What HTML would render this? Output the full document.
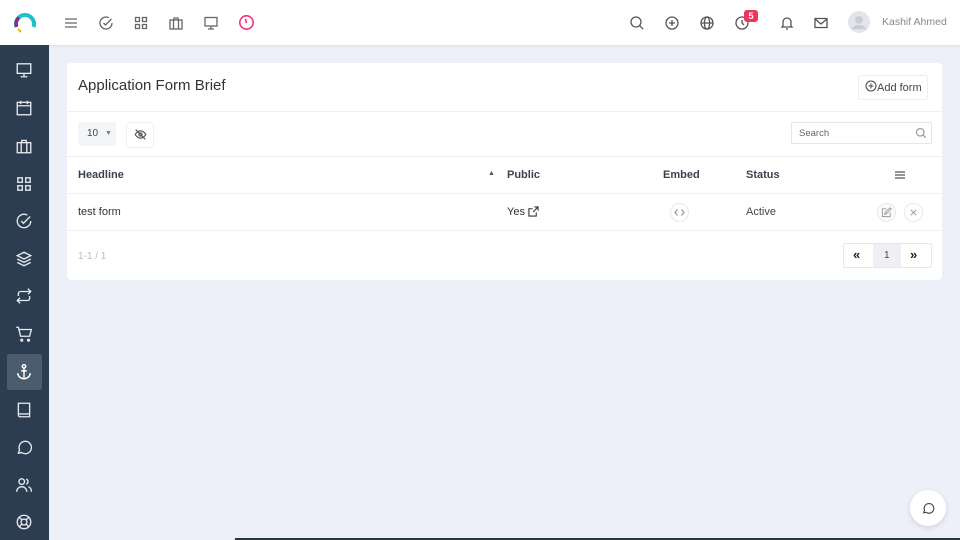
<!DOCTYPE html>
<html><head><meta charset="utf-8"><style>
*{box-sizing:border-box;margin:0;padding:0}
body{width:960px;height:540px;overflow:hidden;background:#eef0f9;font-family:"Liberation Sans",sans-serif;position:relative;color:#333}
.top{position:absolute;left:0;top:0;width:960px;height:45px;background:#fff;box-shadow:0 1px 3px rgba(0,0,0,.08)}
.side{position:absolute;left:0;top:45px;width:49px;height:495px;background:#2c3d51}
.ic{position:absolute}
svg{display:block}
.card{position:absolute;left:67px;top:63px;width:875px;height:217px;background:#fff;border-radius:4px}
.hl{position:absolute;left:0;width:875px;height:1px;background:#eef0f3}
.t{position:absolute;font-size:11px;white-space:nowrap}
.b{font-weight:bold;color:#3a4250}
</style></head><body>
<div class="top">
 <svg class="ic" style="left:13px;top:12px" width="24" height="24" viewBox="0 0 24 24"><path d="M3.5 15 A9 9 0 1 1 20.5 15" fill="none" stroke="#1fc1c9" stroke-width="4"/><path d="M3.5 15 A9 9 0 0 1 6 5.5" fill="none" stroke="#8a2c8e" stroke-width="3.5"/><path d="M5 17 l3 3" stroke="#f2b400" stroke-width="2"/></svg>
 <svg class="ic" style="left:63px;top:15px" width="16" height="16" viewBox="0 0 16 16" fill="none" stroke="#666" stroke-width="1.3"><path d="M2 4h12M2 8h12M2 12h12"/></svg>
 <svg class="ic" style="left:98px;top:15px" width="16" height="16" viewBox="0 0 16 16" fill="none" stroke="#666" stroke-width="1.3"><path d="M14 8a6 6 0 1 1-3-5.2"/><path d="M5.5 8l2 2 6-6"/></svg>
 <svg class="ic" style="left:133px;top:15px" width="16" height="16" viewBox="0 0 16 16" fill="none" stroke="#666" stroke-width="1.3"><rect x="2.5" y="2.5" width="4" height="4"/><rect x="9.5" y="2.5" width="4" height="4"/><rect x="2.5" y="9.5" width="4" height="4"/><rect x="9.5" y="9.5" width="4" height="4"/></svg>
 <svg class="ic" style="left:168px;top:15px" width="16" height="16" viewBox="0 0 16 16" fill="none" stroke="#666" stroke-width="1.3"><rect x="2" y="5" width="12" height="9"/><path d="M6 5V3h4v2M5.5 5v9M10.5 5v9"/></svg>
 <svg class="ic" style="left:203px;top:15px" width="16" height="16" viewBox="0 0 16 16" fill="none" stroke="#666" stroke-width="1.3"><rect x="2" y="2.5" width="12" height="8.5"/><path d="M8 11v3M5 14h6"/></svg>
 <svg class="ic" style="left:238px;top:14px" width="17" height="17" viewBox="0 0 16 16" fill="none" stroke="#f0347a" stroke-width="1.5"><circle cx="8" cy="8" r="6.3"/><path d="M7 4.5l1 4"/></svg>
 <svg class="ic" style="left:629px;top:15px" width="16" height="16" viewBox="0 0 16 16" fill="none" stroke="#555" stroke-width="1.3"><circle cx="7" cy="7" r="5"/><path d="M10.7 10.7l3.5 3.5"/></svg>
 <svg class="ic" style="left:664px;top:15px" width="16" height="16" viewBox="0 0 16 16" fill="none" stroke="#555" stroke-width="1.3"><circle cx="8" cy="8" r="6"/><path d="M8 5v6M5 8h6"/></svg>
 <svg class="ic" style="left:699px;top:15px" width="16" height="16" viewBox="0 0 16 16" fill="none" stroke="#555" stroke-width="1.3"><circle cx="8" cy="8" r="6"/><ellipse cx="8" cy="8" rx="2.6" ry="6"/><path d="M2 8h12"/></svg>
 <svg class="ic" style="left:734px;top:15px" width="16" height="16" viewBox="0 0 16 16" fill="none" stroke="#555" stroke-width="1.3"><circle cx="8" cy="8" r="6"/><path d="M8 5v3l2 2"/></svg>
 <div style="position:absolute;left:744px;top:10px;width:14px;height:12px;background:#f0345a;border-radius:3px;color:#fff;font-size:9px;text-align:center;line-height:12px;font-weight:bold">5</div>
 <svg class="ic" style="left:779px;top:15px" width="16" height="16" viewBox="0 0 16 16" fill="none" stroke="#555" stroke-width="1.3"><path d="M4 11V7a4 4 0 0 1 8 0v4l1 1H3z"/><path d="M7 14h2"/></svg>
 <svg class="ic" style="left:813px;top:15px" width="16" height="16" viewBox="0 0 16 16" fill="none" stroke="#555" stroke-width="1.3"><rect x="2" y="3.5" width="12" height="9"/><path d="M2 4l6 5 6-5"/></svg>
 <svg class="ic" style="left:848px;top:11px" width="22" height="22" viewBox="0 0 20 20"><circle cx="10" cy="10" r="10" fill="#e3e5ea"/><circle cx="10" cy="8" r="3.5" fill="#c8ccd3"/><path d="M3.5 16.5a7 6 0 0 1 13 0" fill="#c8ccd3"/></svg>
 <div class="t" style="left:882px;top:16px;color:#888;font-size:10.5px">Kashif Ahmed</div>
</div>
<div class="side">
 <div style="position:absolute;left:7px;top:309px;width:35px;height:36px;background:#4c5c6f;border-radius:2px"></div>
 <svg class="ic" style="left:15px;top:16px" width="18" height="18" viewBox="0 0 16 16" fill="none" stroke="#e6e9ee" stroke-width="1.2"><rect x="2" y="2.5" width="12" height="8.5"/><path d="M8 11v3M5 14h6"/></svg>
 <svg class="ic" style="left:15px;top:54px" width="18" height="18" viewBox="0 0 16 16" fill="none" stroke="#e6e9ee" stroke-width="1.2"><rect x="2" y="3" width="12" height="11"/><path d="M2 6h12M5 1.5v3M11 1.5v3"/></svg>
 <svg class="ic" style="left:15px;top:92px" width="18" height="18" viewBox="0 0 16 16" fill="none" stroke="#e6e9ee" stroke-width="1.2"><rect x="2" y="5" width="12" height="9"/><path d="M6 5V3h4v2M5.5 5v9M10.5 5v9"/></svg>
 <svg class="ic" style="left:15px;top:130px" width="18" height="18" viewBox="0 0 16 16" fill="none" stroke="#e6e9ee" stroke-width="1.2"><rect x="2.5" y="2.5" width="4" height="4"/><rect x="9.5" y="2.5" width="4" height="4"/><rect x="2.5" y="9.5" width="4" height="4"/><rect x="9.5" y="9.5" width="4" height="4"/></svg>
 <svg class="ic" style="left:15px;top:167px" width="18" height="18" viewBox="0 0 16 16" fill="none" stroke="#e6e9ee" stroke-width="1.2"><path d="M14 8a6 6 0 1 1-3-5.2"/><path d="M5.5 8l2 2 6-6"/></svg>
 <svg class="ic" style="left:15px;top:205px" width="18" height="18" viewBox="0 0 16 16" fill="none" stroke="#e6e9ee" stroke-width="1.2"><path d="M8 2l6 3-6 3-6-3z"/><path d="M2 8l6 3 6-3M2 11l6 3 6-3"/></svg>
 <svg class="ic" style="left:15px;top:242px" width="18" height="18" viewBox="0 0 16 16" fill="none" stroke="#e6e9ee" stroke-width="1.2"><path d="M3 8V6a2 2 0 0 1 2-2h9M11.5 1.5L14 4l-2.5 2.5M13 8v2a2 2 0 0 1-2 2H2M4.5 14.5L2 12l2.5-2.5"/></svg>
 <svg class="ic" style="left:15px;top:280px" width="18" height="18" viewBox="0 0 16 16" fill="none" stroke="#e6e9ee" stroke-width="1.2"><path d="M1 2h2l2 8h8l1.5-6H4"/><circle cx="6" cy="13.5" r=".8"/><circle cx="12" cy="13.5" r=".8"/></svg>
 <svg class="ic" style="left:15px;top:318px" width="18" height="18" viewBox="0 0 16 16" fill="none" stroke="#fff" stroke-width="1.3"><circle cx="8" cy="3" r="1.5"/><path d="M8 4.5V14M2.5 9a5.5 5 0 0 0 11 0M5.5 7h5"/></svg>
 <svg class="ic" style="left:15px;top:356px" width="18" height="18" viewBox="0 0 16 16" fill="none" stroke="#e6e9ee" stroke-width="1.2"><path d="M3 2h10v12H4.5A1.5 1.5 0 0 1 3 12.5z"/><path d="M3 11.5h10"/></svg>
 <svg class="ic" style="left:15px;top:393px" width="18" height="18" viewBox="0 0 16 16" fill="none" stroke="#e6e9ee" stroke-width="1.2"><path d="M3 13.5l1-3A5.5 5.5 0 1 1 6 13z"/></svg>
 <svg class="ic" style="left:15px;top:431px" width="18" height="18" viewBox="0 0 16 16" fill="none" stroke="#e6e9ee" stroke-width="1.2"><circle cx="6" cy="5" r="2.5"/><path d="M1.5 14a4.5 4.5 0 0 1 9 0M10 2.7a2.5 2.5 0 0 1 0 4.6M12 9.5a4.5 4.5 0 0 1 2.5 4.5"/></svg>
 <svg class="ic" style="left:15px;top:468px" width="18" height="18" viewBox="0 0 16 16" fill="none" stroke="#e6e9ee" stroke-width="1.2"><circle cx="8" cy="8" r="6"/><circle cx="8" cy="8" r="2.6"/><path d="M3.8 3.8l2.4 2.4M12.2 3.8L9.8 6.2M3.8 12.2l2.4-2.4M12.2 12.2L9.8 9.8"/></svg>
</div>
<div class="card">
 <div class="t" style="left:11px;top:14px;font-size:15px;color:#333">Application Form Brief</div>
 <div style="position:absolute;left:791px;top:12px;width:70px;height:25px;border:1px solid #eceef2;border-radius:3px"></div>
 <svg class="ic" style="left:798px;top:17px" width="12" height="12" viewBox="0 0 12 12" fill="none" stroke="#444" stroke-width="1"><circle cx="6" cy="6" r="5"/><path d="M6 3.5v5M3.5 6h5"/></svg>
 <div class="t" style="left:810px;top:19px;color:#444">Add form</div>
 <div class="hl" style="top:48px"></div>
 <div style="position:absolute;left:11px;top:59px;width:38px;height:24px;background:#f4f5f8;border-radius:3px"></div>
 <div class="t" style="left:20px;top:65px;font-size:10px;color:#444">10</div>
 <div class="t" style="left:38px;top:67px;font-size:7px;color:#777">▼</div>
 <div style="position:absolute;left:59px;top:59px;width:28px;height:26px;border:1px solid #eef0f3;border-radius:4px"></div>
 <svg class="ic" style="left:67px;top:65px" width="13" height="13" viewBox="0 0 16 16" fill="none" stroke="#555" stroke-width="1.4"><path d="M1.5 8s2.5-4.5 6.5-4.5S14.5 8 14.5 8 12 12.5 8 12.5 1.5 8 1.5 8z"/><circle cx="8" cy="8" r="2"/><path d="M2 2l12 12"/></svg>
 <div style="position:absolute;left:724px;top:59px;width:141px;height:22px;border:1px solid #e3e6ec;border-radius:2px"></div>
 <div class="t" style="left:732px;top:65px;font-size:9.5px;color:#666">Search</div>
 <svg class="ic" style="left:848px;top:64px" width="12" height="12" viewBox="0 0 16 16" fill="none" stroke="#999" stroke-width="1.6"><circle cx="7" cy="7" r="5"/><path d="M10.7 10.7l3.5 3.5"/></svg>
 <div class="hl" style="top:93px"></div>
 <div class="t b" style="left:11px;top:106px">Headline</div>
 <div class="t" style="left:421px;top:107px;font-size:7px;color:#555">▲</div>
 <div class="t b" style="left:440px;top:106px">Public</div>
 <div class="t b" style="left:596px;top:106px">Embed</div>
 <div class="t b" style="left:679px;top:106px">Status</div>
 <svg class="ic" style="left:827px;top:106px" width="12" height="12" viewBox="0 0 12 12" fill="none" stroke="#555" stroke-width="1.2"><path d="M1 3h10M1 6h10M1 9h10"/></svg>
 <div class="hl" style="top:130px"></div>
 <div class="t" style="left:11px;top:143px;color:#333">test form</div>
 <div class="t" style="left:440px;top:143px;color:#333">Yes</div>
 <svg class="ic" style="left:461px;top:143px" width="11" height="11" viewBox="0 0 12 12" fill="none" stroke="#333" stroke-width="1.2"><path d="M9 7v4H1V3h4M7 1h4v4M11 1L5.5 6.5"/></svg>
 <div style="position:absolute;left:603px;top:140px;width:19px;height:19px;border:1px solid #e6e8ee;border-radius:50%"></div>
 <svg class="ic" style="left:607px;top:145px" width="11" height="9" viewBox="0 0 11 9" fill="none" stroke="#888" stroke-width="1"><path d="M3.5 1.5L1 4.5l2.5 3M7.5 1.5L10 4.5l-2.5 3"/></svg>
 <div class="t" style="left:679px;top:143px;color:#444">Active</div>
 <div style="position:absolute;left:810px;top:140px;width:19px;height:19px;border:1px solid #e6e8ee;border-radius:50%;background:#fafbfc"></div>
 <svg class="ic" style="left:814px;top:144px" width="11" height="11" viewBox="0 0 12 12" fill="none" stroke="#999" stroke-width="1"><path d="M6 2H1.5v8.5H10V6M4 8l.5-2L10 .8l1.2 1.2L5.8 7.5z"/></svg>
 <div style="position:absolute;left:837px;top:140px;width:19px;height:19px;border:1px solid #e6e8ee;border-radius:50%"></div>
 <svg class="ic" style="left:842px;top:145px" width="9" height="9" viewBox="0 0 10 10" fill="none" stroke="#999" stroke-width="1.1"><path d="M2 2l6 6M8 2l-6 6"/></svg>
 <div class="hl" style="top:167px"></div>
 <div class="t" style="left:11px;top:188px;font-size:10px;color:#bbb">1-1 / 1</div>
 <div style="position:absolute;left:776px;top:180px;width:89px;height:25px;border:1px solid #e6e8ee;border-radius:2px"></div>
 <div style="position:absolute;left:806px;top:181px;width:28px;height:23px;background:#eef0f5"></div>
 <div class="t" style="left:786px;top:185px;font-size:13px;color:#222;font-weight:bold;line-height:13px">«</div>
 <div class="t" style="left:817px;top:187px;font-size:10px;color:#444">1</div>
 <div class="t" style="left:843px;top:185px;font-size:13px;color:#222;font-weight:bold;line-height:13px">»</div>
</div>
<div style="position:absolute;left:910px;top:490px;width:36px;height:36px;background:#fff;border-radius:50%;box-shadow:0 2px 6px rgba(0,0,0,.12)"></div>
<svg class="ic" style="left:921px;top:501px" width="14" height="14" viewBox="0 0 16 16" fill="none" stroke="#445" stroke-width="1.3"><path d="M3 13.5l1-3A5.5 5.5 0 1 1 6 13z"/></svg>
<div style="position:absolute;left:235px;top:538px;width:725px;height:2px;background:#2c3440"></div>
</body></html>
